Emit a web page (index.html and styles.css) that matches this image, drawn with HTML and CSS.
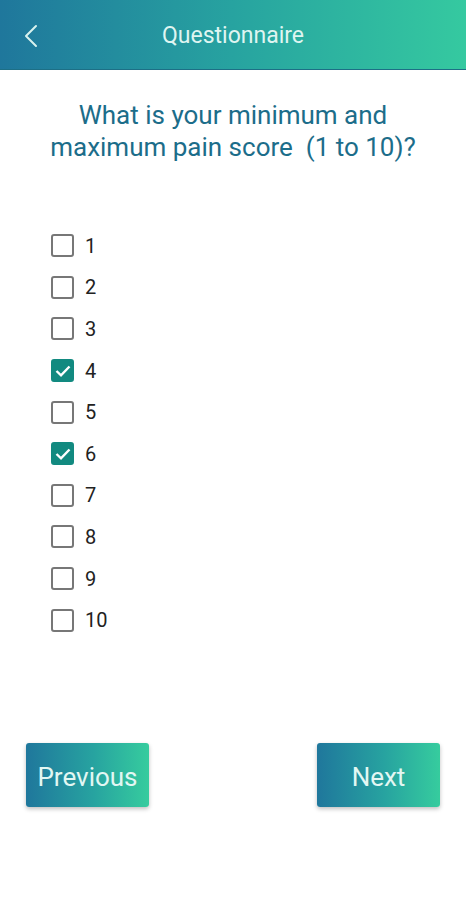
FILE: index.html
```html
<!DOCTYPE html>
<html>
<head>
<meta charset="utf-8">
<link rel="stylesheet" href="styles.css">
</head>
<body>
<header class="appbar">
  <svg class="back" width="14" height="24" viewBox="0 0 14 24"><path d="M12 2 L2 12 L12 22" fill="none" stroke="#d8f2ee" stroke-width="2" stroke-linecap="round" stroke-linejoin="round"/></svg>
  <h1 class="title">Questionnaire</h1>
</header>
<main class="content">
  <h2 class="question">What is your minimum and<br>maximum pain score&nbsp; (1 to 10)?</h2>
  <ul class="options">
    <li class="option"><span class="box"></span><span class="label">1</span></li>
    <li class="option"><span class="box"></span><span class="label">2</span></li>
    <li class="option"><span class="box"></span><span class="label">3</span></li>
    <li class="option"><span class="box checked"><svg viewBox="0 0 22 22" width="22" height="22"><path d="M4.5 11 L9 15.3 L17.5 6.5" fill="none" stroke="#fff" stroke-width="2.4"/></svg></span><span class="label">4</span></li>
    <li class="option"><span class="box"></span><span class="label">5</span></li>
    <li class="option"><span class="box checked"><svg viewBox="0 0 22 22" width="22" height="22"><path d="M4.5 11 L9 15.3 L17.5 6.5" fill="none" stroke="#fff" stroke-width="2.4"/></svg></span><span class="label">6</span></li>
    <li class="option"><span class="box"></span><span class="label">7</span></li>
    <li class="option"><span class="box"></span><span class="label">8</span></li>
    <li class="option"><span class="box"></span><span class="label">9</span></li>
    <li class="option"><span class="box"></span><span class="label">10</span></li>
  </ul>
  <div class="actions">
    <button class="btn">Previous</button>
    <button class="btn">Next</button>
  </div>
</main>
</body>
</html>
```
FILE: styles.css
```css
* { box-sizing: border-box; }
html, body { margin: 0; padding: 0; background: #fff; }
body { font-family: Roboto, "Liberation Sans", sans-serif; width: 466px; height: 900px; overflow: hidden; }
.appbar {
  height: 70px;
  background: linear-gradient(90deg, #1f779c 0%, #27a3a0 50%, #35c9a0 100%);
  display: flex;
  align-items: center;
  justify-content: center;
  position: relative;
  border-bottom: 1px solid #1d6f86;
}
.back { position: absolute; left: 24px; top: 24px; }
.title {
  margin: 2px 0 0;
  font-size: 23px;
  font-weight: 400;
  color: #dff5f1;
}
.question {
  margin: 29px 0 0;
  text-align: center;
  font-size: 26px;
  font-weight: 400;
  line-height: 32px;
  color: #1c6d8a;
}
.options {
  list-style: none;
  margin: 62px 0 0;
  padding: 0 0 0 51px;
}
.option {
  height: 41.6px;
  display: flex;
  align-items: center;
  gap: 11px;
}
.box {
  width: 23px;
  height: 23px;
  border: 2px solid #777;
  border-radius: 3px;
  display: flex;
  align-items: center;
  justify-content: center;
}
.box.checked {
  background: #128a80;
  border-color: #128a80;
}
.box svg { flex: none; }
.label {
  font-size: 20px;
  color: #222;
}
.actions {
  display: flex;
  justify-content: space-between;
  padding: 0 26px;
  margin-top: 102px;
}
.btn {
  width: 123px;
  height: 64px;
  border: none;
  border-radius: 3px;
  background: linear-gradient(90deg, #1f779c 0%, #27a3a0 55%, #36cc9e 100%);
  color: #e2f7f3;
  font-family: Roboto, "Liberation Sans", sans-serif;
  font-size: 26px;
  box-shadow: 0 2px 4px rgba(0,0,0,0.25);
  padding: 4px 0 0;
}
```
